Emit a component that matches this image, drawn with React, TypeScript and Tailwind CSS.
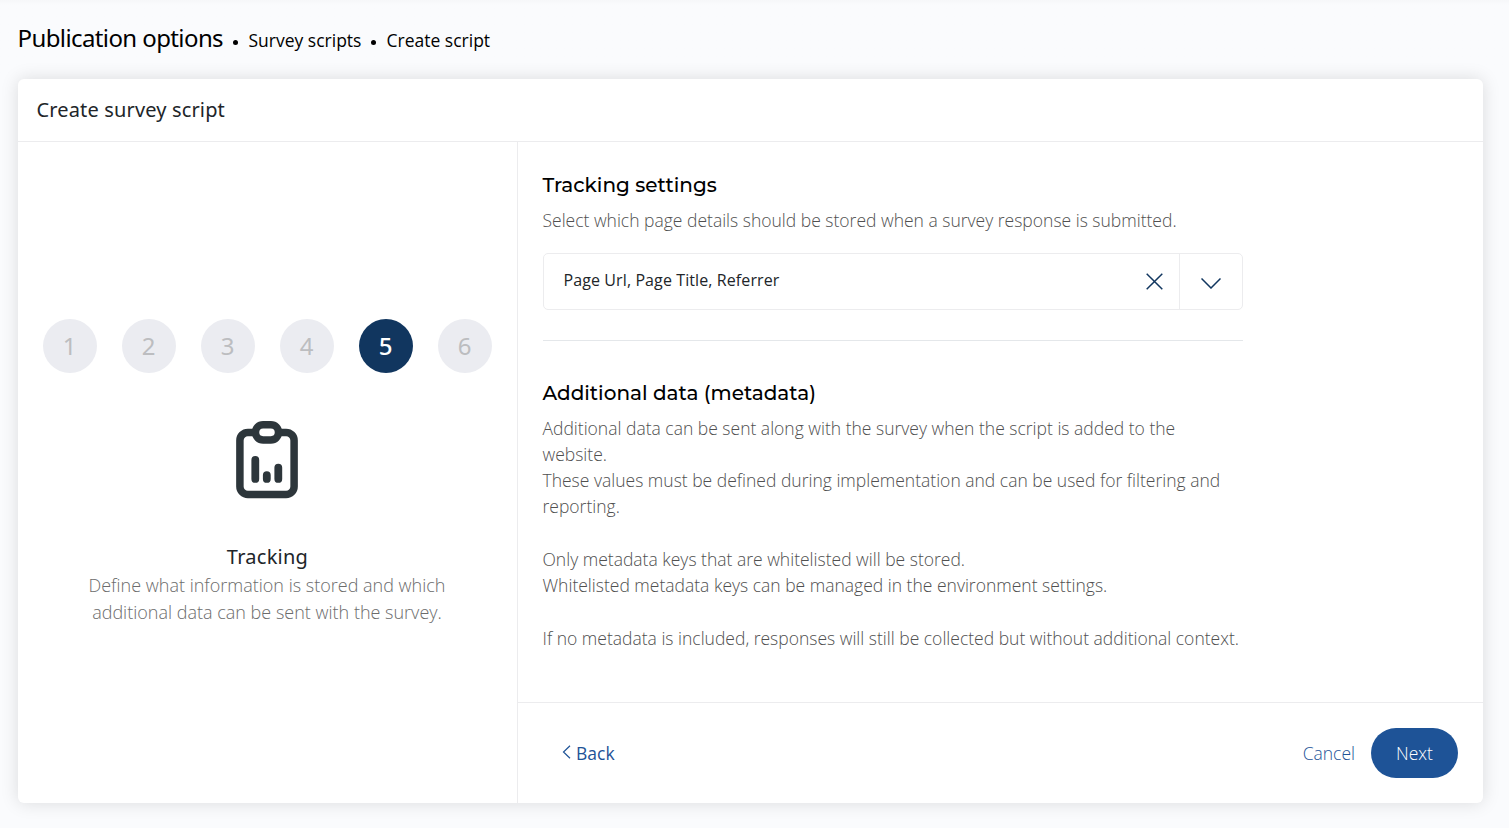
const steps = [1, 2, 3, 4, 5, 6]
const currentStep = 5

function ClipboardIcon() {
    return (
        <svg width="62" height="78" viewBox="0 0 62 78" fill="none" stroke="#2d363b" strokeLinecap="round">
            <rect x="3.9" y="11.4" width="54.2" height="62" rx="8" strokeWidth="7.5" />
            <rect x="19.5" y="3.75" width="23" height="15.2" rx="7.6" fill="white" strokeWidth="7.5" />
            <path d="M19.3 38.9v19M30.8 54.1v3.8M42.3 46.6v11.3" strokeWidth="7.8" />
        </svg>
    )
}

function Header() {
    return (
        <div className="flex h-[79px] items-baseline whitespace-nowrap bg-linear-to-b from-[#f6f7f9] to-[#fafbfd] to-[5px] pl-[17.5px] pt-5 text-black">
            <h1 className="w-[206.5px] font-['Noto_Sans'] text-[24px] leading-9 tracking-[-0.6px]">Publication options</h1>
            <span className="ml-[9px] mr-[10.5px] mt-5 size-[5px] self-start rounded-full bg-black" />
            <span className="w-[113.5px] text-[17.5px]">Survey scripts</span>
            <span className="ml-[9px] mr-[10.5px] mt-5 size-[5px] self-start rounded-full bg-black" />
            <span className="text-[17.5px]">Create script</span>
        </div>
    )
}

function StepsPanel() {
    return (
        <div className="w-[500px] border-r border-[#ececee] pt-[177px]">
            <div className="flex gap-[25px] pl-[25px]">
                {
                    steps.map((step) => (
                        <div
                            key={step}
                            className={`flex size-[54px] items-center justify-center rounded-full pr-px font-['Noto_Sans'] text-[24px] ${step === currentStep ? "bg-[#11365f] font-medium text-white" : "bg-[#ebecf1] text-[#bcbdc0]"}`}
                        >
                            {step}
                        </div>
                    ))
                }
            </div>
            <div className="mt-12 flex justify-center pr-[2px]">
                <ClipboardIcon />
            </div>
            <div className="mt-[43px] pr-px text-center">
                <h3 className="pl-px font-['Noto_Sans'] text-[20px] leading-[30px] tracking-[0.25px] text-[#212529]">Tracking</h3>
                <p className="text-[18px] font-light leading-[27px] text-[#6c6c6c]">
                    Define what information is stored and which<br />
                    additional data can be sent with the survey.
                </p>
            </div>
        </div>
    )
}

function TrackingSelect() {
    return (
        <div className="mt-[20px] flex h-[57px] rounded-[5px] border border-[#ececee]">
            <div className="flex flex-1 items-center pb-1 pl-5 text-[16px] font-normal tracking-[0.1px] text-[#212529]">Page Url, Page Title, Referrer</div>
            <div className="flex w-[50px] items-center">
                <svg width="17" height="17" viewBox="0 0 17 17" fill="none" stroke="#11365f" strokeWidth="1.5" className="ml-[17.5px]">
                    <path d="M.7.7l15.6 15.6M16.3.7L.7 16.3" />
                </svg>
            </div>
            <div className="flex w-[63px] items-center justify-center border-l border-[#ececee] pt-[3px]">
                <svg width="20" height="11" viewBox="0 0 20 11" fill="none" stroke="#11365f" strokeWidth="1.5">
                    <path d="M.5.5l9.5 9.5 9.5-9.5" />
                </svg>
            </div>
        </div>
    )
}

function Content() {
    return (
        <div className="h-[560px] pl-[24.5px] pt-7">
            <div className="w-[700px] text-[17.5px] font-light leading-[26.25px] text-[#505050]">
                <h2 className="font-['Montserrat','Inter'] text-[20px] font-medium leading-[30px] text-black">Tracking settings</h2>
                <p className="mt-[7px] whitespace-nowrap">Select which page details should be stored when a survey response is submitted.</p>
                <TrackingSelect />
                <div className="mt-[30px] border-t border-[#e4e7ea]" />
                <h2 className="mt-[37px] font-['Montserrat','Inter'] text-[20px] font-medium leading-[30px] text-black">Additional data (metadata)</h2>
                <p className="mt-[6.35px] whitespace-nowrap">
                    Additional data can be sent along with the survey when the script is added to the<br />
                    website.<br />
                    These values must be defined during implementation and can be used for filtering and<br />
                    reporting.<br /><br />
                    Only metadata keys that are whitelisted will be stored.<br />
                    Whitelisted metadata keys can be managed in the environment settings.<br /><br />
                    If no metadata is included, responses will still be collected but without additional context.
                </p>
            </div>
        </div>
    )
}

function Footer() {
    return (
        <div className="flex flex-1 items-center justify-between border-t border-[#ececee] pl-11 pr-[25px] text-[17.5px]">
            <button className="flex items-center gap-[5px] text-[#1e5397]">
                <svg className="mb-0.5" width="9" height="14" viewBox="0 0 9 14" fill="none" stroke="currentColor" strokeWidth="1.2">
                    <path d="M8 .7L1.5 7 8 13.3" />
                </svg>
                Back
            </button>
            <div className="flex items-center gap-4 font-light">
                <button className="text-[#1e5397]">Cancel</button>
                <button className="h-[50px] w-[87px] rounded-full bg-[#1e5397] text-white">Next</button>
            </div>
        </div>
    )
}

export default function App() {
    return (
        <div className="h-[828px] overflow-hidden bg-[#fafbfd] font-['Open_Sans',sans-serif]">
            <Header />
            <div className="ml-[18px] flex h-[724px] w-[1465px] flex-col rounded-[6px] bg-white shadow-[0_0_18px_rgba(0,0,0,0.13)]">
                <div className="h-[63px] border-b border-[#ececee] pl-[18.5px] pt-4 font-['Noto_Sans'] text-[20px] leading-[30px] tracking-[0.15px] text-[#212529]">Create survey script</div>
                <div className="flex flex-1">
                    <StepsPanel />
                    <div className="flex flex-1 flex-col">
                        <Content />
                        <Footer />
                    </div>
                </div>
            </div>
        </div>
    )
}
